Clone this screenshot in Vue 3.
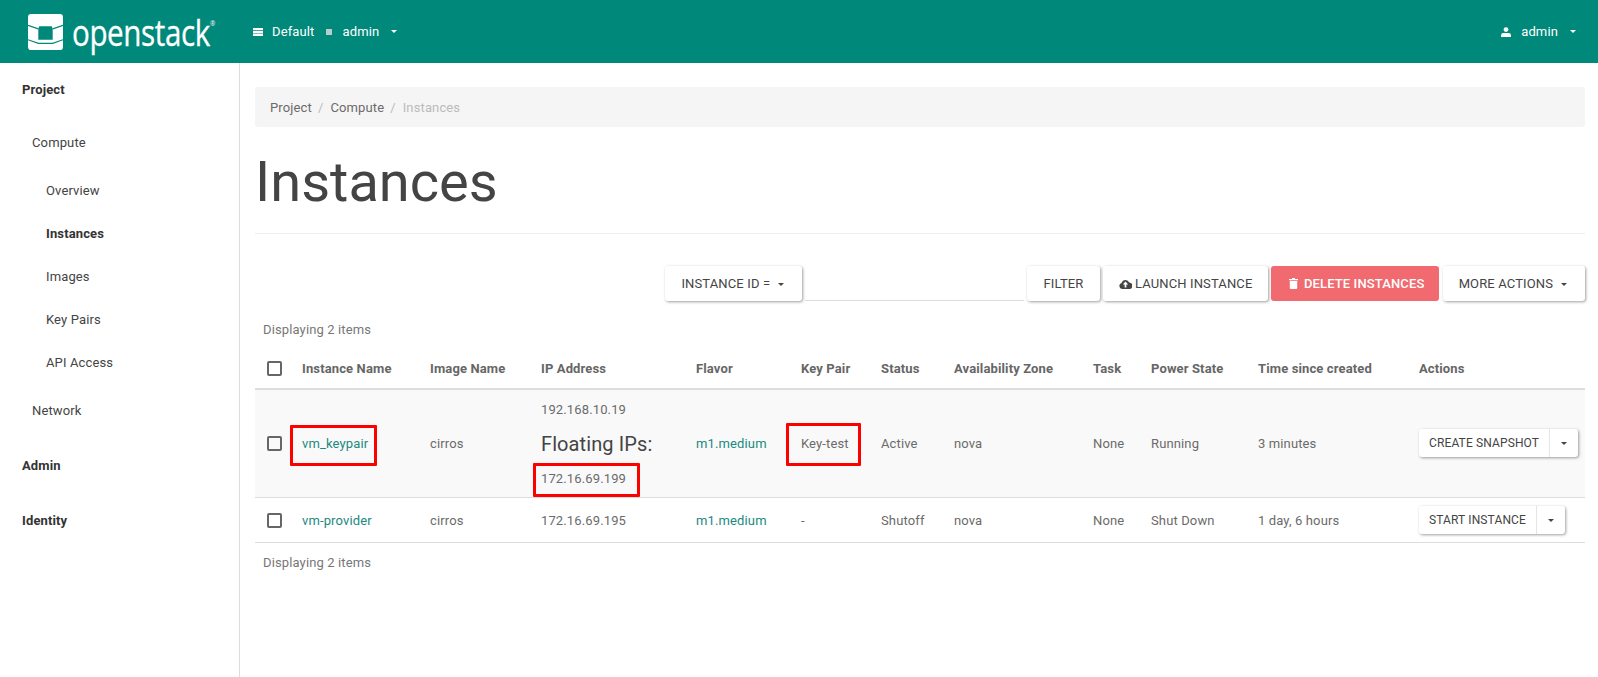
<template>
  <div class="page">
    <header class="topbar">
      <div class="brand">
        <svg class="logo" width="35" height="36" viewBox="0 0 34 35">
          <path fill="#fff" fill-rule="evenodd" d="M3 0H31Q34 0 34 3V32Q34 35 31 35H3Q0 35 0 32V3Q0 0 3 0ZM11 12 10 14V25H24V14L23 12Z" />
          <path fill="none" stroke="#00897b" stroke-width="1.2" d="M0 11L10 14.500M34 11L24 14.500M0 25L10 28.500H24L34 25" />
        </svg>
        <span class="wordmark">openstack<sup>®</sup></span>
      </div>
      <div class="context">
        <svg width="10" height="8" viewBox="0 0 10 8"><path fill="#fff" d="M0 0h10v2.300H0zM0 2.900h10v2.300H0zM0 5.800h10v2.200H0z" /></svg>
        <span class="ctx-label">Default</span>
        <i class="ctx-square"></i>
        <span class="ctx-label">admin</span>
        <i class="caret caret-light"></i>
      </div>
      <div class="user-menu">
        <svg width="10" height="10" viewBox="0 0 10 10"><circle cx="5" cy="2.600" r="2.400" fill="#fff" /><path fill="#fff" d="M0 10V8.200Q0 6 2.500 6h5Q10 6 10 8.200V10z" /></svg>
        <span class="ctx-label">admin</span>
        <i class="caret caret-light"></i>
      </div>
    </header>

    <div class="shell">
      <nav class="sidebar">
        <div class="nav-top nav-project">Project</div>
        <div class="nav-group nav-compute">Compute</div>
        <a v-for="item in computeLinks" :key="item" class="nav-link" :class="{ active: item === 'Instances' }">{{ item }}</a>
        <div class="nav-group nav-network">Network</div>
        <div class="nav-top nav-admin">Admin</div>
        <div class="nav-top nav-identity">Identity</div>
      </nav>

      <main class="content">
        <div class="breadcrumb">
          <span>Project</span><em>/</em><span>Compute</span><em>/</em><span class="crumb-current">Instances</span>
        </div>
        <div class="page-header"><h1>Instances</h1></div>

        <div class="toolbar">
          <button class="btn filter-field">Instance ID = <i class="caret"></i></button>
          <div class="filter-input"></div>
          <button class="btn filter-btn">Filter</button>
          <button class="btn launch">
            <svg width="13" height="10" viewBox="0 0 13 10"><path fill="#444" d="M3.200 10A3 3 0 0 1 2.600 4.100 4 4 0 0 1 10.200 3.600 3.200 3.200 0 0 1 10 10ZM6.500 2.600 3.800 5.600H5.600V8.400H7.400V5.600H9.200Z" fill-rule="evenodd" /></svg>
            Launch Instance
          </button>
          <button class="btn danger">
            <svg width="9" height="11" viewBox="0 0 9 11"><path fill="#fff" d="M3 0H6V1H9V2.200H0V1H3ZM.8 3H8.200V10Q8.200 11 7.200 11H1.800Q.8 11 .8 10Z" /></svg>
            Delete Instances
          </button>
          <button class="btn more">More Actions <i class="caret"></i></button>
        </div>

        <div class="count count-top">Displaying 2 items</div>

        <div class="table-wrap">
          <table class="instances">
            <colgroup>
              <col v-for="(w, i) in colWidths" :key="i" :style="{ width: w + 'px' }" />
            </colgroup>
            <thead>
              <tr>
                <th><span class="check"></span></th>
                <th v-for="h in headers" :key="h">{{ h }}</th>
              </tr>
            </thead>
            <tbody>
              <tr v-for="row in rows" :key="row.name" :class="{ shaded: row.floating }">
                <td><span class="check"></span></td>
                <td><a class="link">{{ row.name }}</a></td>
                <td>{{ row.image }}</td>
                <td>
                  <template v-if="row.floating">
                    <div class="ip ip-first">{{ row.ip }}</div>
                    <h4 class="floating">Floating IPs:</h4>
                    <div class="ip">{{ row.floating }}</div>
                  </template>
                  <template v-else>{{ row.ip }}</template>
                </td>
                <td><a class="link">{{ row.flavor }}</a></td>
                <td>{{ row.keyPair }}</td>
                <td>{{ row.status }}</td>
                <td>{{ row.zone }}</td>
                <td>{{ row.task }}</td>
                <td>{{ row.power }}</td>
                <td>{{ row.age }}</td>
                <td>
                  <div class="split">
                    <span class="split-main">{{ row.action }}</span>
                    <span class="split-caret"><i class="caret"></i></span>
                  </div>
                </td>
              </tr>
            </tbody>
          </table>
          <!-- red annotation boxes drawn over the table -->
          <div v-for="(m, i) in marks" :key="i" class="mark" :style="m"></div>
        </div>

        <div class="count count-bottom">Displaying 2 items</div>
      </main>
    </div>
  </div>
</template>

<script setup>
const computeLinks = ['Overview', 'Instances', 'Images', 'Key Pairs', 'API Access']

const headers = [
  'Instance Name', 'Image Name', 'IP Address', 'Flavor', 'Key Pair', 'Status',
  'Availability Zone', 'Task', 'Power State', 'Time since created', 'Actions'
]

const colWidths = [39, 128, 111, 155, 105, 80, 73, 139, 58, 107, 161, 174]

const rows = [
  {
    name: 'vm_keypair', image: 'cirros', ip: '192.168.10.19', floating: '172.16.69.199',
    flavor: 'm1.medium', keyPair: 'Key-test', status: 'Active', zone: 'nova', task: 'None',
    power: 'Running', age: '3 minutes', action: 'Create Snapshot'
  },
  {
    name: 'vm-provider', image: 'cirros', ip: '172.16.69.195', floating: null,
    flavor: 'm1.medium', keyPair: '-', status: 'Shutoff', zone: 'nova', task: 'None',
    power: 'Shut Down', age: '1 day, 6 hours', action: 'Start Instance'
  }
]

// offsets are relative to the table's top-left corner (255, 348)
const box = (x, y, w, h) => ({ left: x - 255 + 'px', top: y - 348 + 'px', width: w + 'px', height: h + 'px' })
const marks = [box(290, 425, 87, 41), box(533, 463, 107, 34), box(786, 423, 75, 43)]
</script>

<style>
html, body { margin: 0; background: #fff; overflow: hidden; }
</style>

<style scoped>
.page {
  min-height: 677px;
  font-family: Roboto, "Liberation Sans", sans-serif;
  font-size: 13px;
  letter-spacing: 0.13px;
  color: #6b6b6b;
}

.topbar {
  height: 63px;
  background: #00897b;
  display: flex;
  align-items: center;
  color: #fff;
  padding: 0 22px 0 28px;
}
.brand { display: flex; align-items: center; width: 225px; }
.logo { flex: none; margin-right: 9px; }
.wordmark {
  display: inline-block;
  font-family: "Open Sans", sans-serif;
  font-size: 37px;
  line-height: 44px;
  letter-spacing: -0.5px;
  -webkit-text-stroke: 0.3px #fff;
  transform: scaleX(0.8);
  transform-origin: left center;
  white-space: nowrap;
}
.wordmark sup { font-size: 8px; vertical-align: 20px; line-height: 0; letter-spacing: 0; -webkit-text-stroke: 0; }
.context { display: flex; align-items: center; }
.context svg { margin-right: 9px; }
.ctx-square { width: 6px; height: 6px; background: #b8cfcb; margin: 1px 11px 0 11px; }
.context .caret { margin-left: 12px; }
.user-menu { margin-left: auto; display: flex; align-items: center; }
.user-menu svg { margin-right: 10px; }
.user-menu .caret { margin-left: 12px; }

.caret {
  display: inline-block;
  width: 0;
  height: 0;
  border-top: 3px solid #444;
  border-left: 3px solid transparent;
  border-right: 3px solid transparent;
  vertical-align: middle;
}
.caret-light { border-top-color: #fff; }

.shell { display: flex; min-height: 614px; }

.sidebar {
  width: 239px;
  flex: none;
  border-right: 1px solid #ddd;
  color: #444;
}
.nav-top { padding-left: 22px; font-weight: 700; color: #333; }
.nav-project { height: 52px; line-height: 54px; }
.nav-admin { height: 58px; line-height: 60px; }
.nav-identity { line-height: 54px; }
.nav-group { padding-left: 32px; }
.nav-compute { line-height: 52px; padding-top: 2px; }
.nav-network { height: 52px; line-height: 54px; }
.nav-link { display: block; padding-left: 46px; line-height: 43px; }
.nav-link.active { font-weight: 700; color: #333; }

.content { flex: 1; min-width: 0; padding: 24px 13px 0 15px; }

.breadcrumb {
  height: 40px;
  line-height: 42px;
  background: #f5f5f5;
  border-radius: 3px;
  padding: 0 15px;
}
.breadcrumb em { font-style: normal; color: #bbb; margin: 0 7px 0 6px; }
.crumb-current { color: #bbb; }

.page-header {
  margin-top: 24px;
  padding-bottom: 20px;
  border-bottom: 1px solid #eee;
}
h1 {
  margin: 0;
  font-size: 56px;
  line-height: 62px;
  font-weight: 400;
  letter-spacing: 0;
  color: #444;
}

.toolbar { display: flex; margin-top: 32px; height: 35px; }
.btn {
  font: inherit;
  letter-spacing: inherit;
  color: #444;
  text-transform: uppercase;
  background: #fff;
  border: 0;
  border-radius: 3px;
  height: 35px;
  padding: 0;
  white-space: nowrap;
  box-shadow: 1px 1px 3px rgba(0, 0, 0, 0.38);
}
.btn .caret { margin-left: 4px; }
.filter-field { width: 137px; margin-left: 410px; padding-right: 2px; }
.filter-input { width: 219px; height: 35px; margin: 0 3px; box-sizing: border-box; border-bottom: 1px solid #ddd; }
.filter-btn { width: 73px; }
.launch { width: 165px; margin-left: 3px; }
.launch svg { vertical-align: -1px; }
.danger { width: 168px; margin-left: 3px; padding-left: 3px; background: #f06a70; color: #fff; font-weight: 500; box-shadow: none; }
.danger svg { vertical-align: -1px; margin-right: 3px; }
.more { width: 142px; margin-left: 4px; padding-right: 2px; }
.more .caret { margin-left: 5px; }

.count { color: #777; }
.count-top { line-height: 36px; padding: 11px 0 0 8px; }
.count-bottom { line-height: 40px; padding-left: 8px; }

.table-wrap { position: relative; }
.instances {
  width: 1330px;
  table-layout: fixed;
  border-collapse: separate;
  border-spacing: 0;
}
th {
  height: 40px;
  padding: 0 8px;
  text-align: left;
  font-weight: 700;
  color: #666;
  border-bottom: 2px solid #ddd;
  white-space: nowrap;
}
td {
  padding: 8px;
  border-bottom: 1px solid #ddd;
  vertical-align: middle;
  white-space: nowrap;
  line-height: 19px;
}
th:first-child, td:first-child { padding-left: 12px; padding-right: 0; }
.shaded td { background: #f9f9f9; padding-bottom: 9px; }
.check {
  display: block;
  width: 15px;
  height: 15px;
  box-sizing: border-box;
  border: 2px solid #666;
  border-radius: 2px;
}
.link { color: #1b8a80; }
.ip-first { margin-top: 2px; }
.floating { margin: 14px 0 14px; font-size: 20px; line-height: 22px; font-weight: 400; letter-spacing: 0.1px; color: #444; }

.split {
  display: inline-flex;
  height: 28px;
  line-height: 28px;
  background: #fff;
  border-radius: 3px;
  color: #444;
  font-size: 12px;
  text-transform: uppercase;
  box-shadow: 1px 1px 3px rgba(0, 0, 0, 0.38);
}
.split-main { padding: 0 10px; border-right: 1px solid #e5e5e5; }
.split-caret { width: 28px; text-align: center; }

.mark {
  position: absolute;
  box-sizing: border-box;
  border: 3px solid #f00;
  border-radius: 1px;
  pointer-events: none;
}
</style>
